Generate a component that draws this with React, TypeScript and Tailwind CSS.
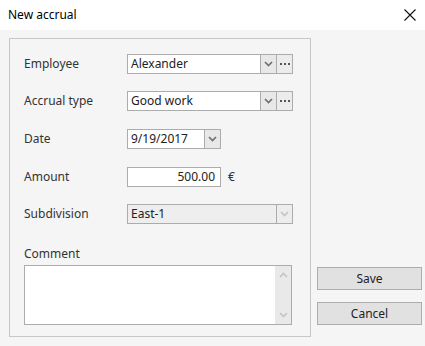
import type { ReactNode } from 'react'

const FONT = { fontFamily: '"Noto Sans", "Liberation Sans", sans-serif' }

function Chevron({ up = false, faint = false }: { up?: boolean; faint?: boolean }) {
  return (
    <svg width="9" height="6" viewBox="0 0 9 6" className={faint ? 'text-[#c4c4c4]' : 'text-[#707070]'}>
      <polyline
        points={up ? '1,5 4.5,1.5 8,5' : '1,1 4.5,4.5 8,1'}
        fill="none"
        stroke="currentColor"
        strokeWidth="1.7"
      />
    </svg>
  )
}

function Dots() {
  return (
    <span className="flex gap-[2px]">
      <span className="w-[2px] h-[2px] bg-[#555]" />
      <span className="w-[2px] h-[2px] bg-[#555]" />
      <span className="w-[2px] h-[2px] bg-[#555]" />
    </span>
  )
}

function Row({ label, children, className = '' }: { label: string; children: ReactNode; className?: string }) {
  return (
    <div className={`flex items-center h-[20px] ${className}`}>
      <span className="w-[103px] text-[#333]">{label}</span>
      {children}
    </div>
  )
}

function Combo({ value, ellipsis = true, disabled = false, width = 'w-[166px]' }: { value: string; ellipsis?: boolean; disabled?: boolean; width?: string }) {
  return (
    <div className={`flex h-[20px] border border-[#acacac] ${width} ${disabled ? 'bg-[#eeeeee]' : 'bg-white'}`}>
      <span className="flex-1 pl-[3px] leading-[18px] text-[#222]">{value}</span>
      <span
        className={`w-[16px] flex items-center justify-center border-l border-[#acacac] ${disabled ? 'bg-[#ededed]' : 'bg-[#e8e8e8]'}`}
      >
        <Chevron faint={disabled} />
      </span>
      {ellipsis && (
        <span className="w-[16px] flex items-center justify-center border-l border-[#acacac] bg-[#ececec]">
          <Dots />
        </span>
      )}
    </div>
  )
}

export default function App() {
  return (
    <div className="w-[425px] h-[346px] bg-[#f5f5f5] text-[12px] overflow-hidden" style={FONT}>
      {/* Title bar */}
      <div className="h-[30px] bg-white flex items-center justify-between pl-[8px] pr-[9px]">
        <span className="text-[12px] text-[#000]">New accrual</span>
        <svg width="12" height="12" viewBox="0 0 12 12">
          <path d="M0.5 0.5 L11.5 11.5 M11.5 0.5 L0.5 11.5" stroke="#111" strokeWidth="1.1" />
        </svg>
      </div>

      <div className="flex pt-[8px] pl-[9px]">
        {/* Group box */}
        <div className="w-[302px] h-[299px] border border-[#c8c8c8] pt-[15px] pl-[14px]">
          <Row label="Employee">
            <Combo value="Alexander" />
          </Row>
          <Row label="Accrual type" className="mt-[17px]">
            <Combo value="Good work" />
          </Row>
          <Row label="Date" className="mt-[18px]">
            <Combo value="9/19/2017" ellipsis={false} width="w-[94px]" />
          </Row>
          <Row label="Amount" className="mt-[18px]">
            <div className="w-[94px] h-[20px] border border-[#acacac] bg-white text-right pr-[5px] leading-[18px] text-[#222]">
              500.00
            </div>
            <span className="ml-[7px] text-[#333]">€</span>
          </Row>
          <Row label="Subdivision" className="mt-[17px]">
            <Combo value="East-1" ellipsis={false} disabled />
          </Row>
          <div className="mt-[20px] h-[20px] leading-[20px] text-[#333]">Comment</div>
          <div className="mt-[1px] w-[268px] h-[60px] border border-[#acacac] bg-white flex justify-end">
            <div className="w-[16px] bg-[#e9e9e9] flex flex-col items-center justify-between py-[6px]">
              <Chevron up faint />
              <Chevron faint />
            </div>
          </div>
        </div>

        {/* Buttons */}
        <div className="ml-[6px] w-[105px] h-[299px] flex flex-col justify-end gap-[12px] pb-[12px]">
          <button className="h-[23px] border border-[#adadad] bg-[#e1e1e1] text-[#222]">Save</button>
          <button className="h-[23px] border border-[#adadad] bg-[#e1e1e1] text-[#222]">Cancel</button>
        </div>
      </div>
    </div>
  )
}
